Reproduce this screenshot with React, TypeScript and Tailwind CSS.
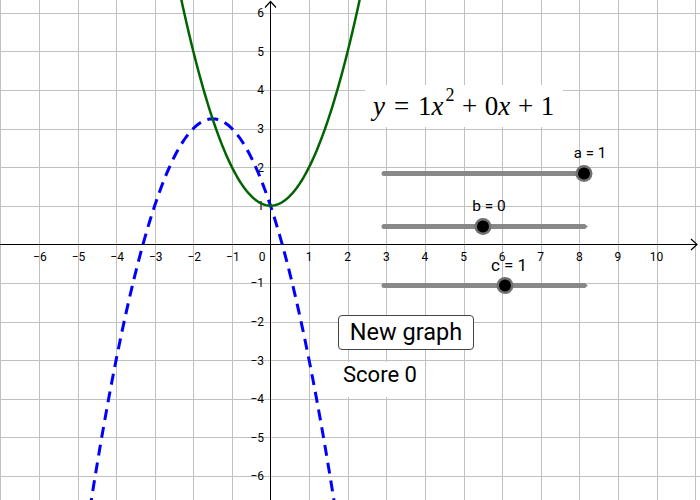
import React from "react";

const OX = 270.5;
const OY = 244.3;
const U = 38.6;

const px = (x: number) => OX + x * U;
const py = (y: number) => OY - y * U;
const snap = (v: number) => Math.round(v) + 0.5;

function curve(f: (x: number) => number, from: number, to: number) {
  const pts: string[] = [];
  const n = 160;
  for (let i = 0; i <= n; i++) {
    const x = from + ((to - from) * i) / n;
    pts.push(`${px(x).toFixed(2)},${py(f(x)).toFixed(2)}`);
  }
  return "M" + pts.join(" L");
}

const minus = (k: number) => (k < 0 ? `\u2212${-k}` : `${k}`);

type Slider = { y: number; knob: number; label: string; lx: number; ly: number; size: number; arrow: boolean };

const SLIDERS: Slider[] = [
  { y: 173.5, knob: 584, label: "a = 1", lx: 590, ly: 157.5, size: 15, arrow: false },
  { y: 226.5, knob: 483, label: "b = 0", lx: 489, ly: 211, size: 15.5, arrow: true },
  { y: 285.5, knob: 505, label: "c = 1", lx: 509, ly: 271, size: 17, arrow: true },
];

function Graph() {
  const xs = Array.from({ length: 19 }, (_, i) => i - 7);
  const ys = Array.from({ length: 15 }, (_, i) => i - 7);
  return (
    <svg width={700} height={500} className="absolute inset-0" style={{ fontFamily: "Roboto, 'Liberation Sans', sans-serif" }}>
      {/* grid */}
      {xs.filter((k) => k !== 0).map((k) => (
        <line key={"gx" + k} x1={snap(px(k))} x2={snap(px(k))} y1={0} y2={500} stroke="#c0c0c0" strokeWidth={1} />
      ))}
      {ys.filter((k) => k !== 0).map((k) => (
        <line key={"gy" + k} x1={0} x2={700} y1={snap(py(k))} y2={snap(py(k))} stroke="#c0c0c0" strokeWidth={1} />
      ))}

      {/* axes */}
      <line x1={0} x2={697} y1={244.5} y2={244.5} stroke="#000" strokeWidth={1} />
      <polyline points="691,239 697,244.5 691,250" fill="none" stroke="#000" strokeWidth={1.2} />
      <line x1={270.5} x2={270.5} y1={1.5} y2={500} stroke="#000" strokeWidth={1} />
      <polyline points="265,7.5 270.5,1.5 276,7.5" fill="none" stroke="#000" strokeWidth={1.2} />

      {/* tick labels */}
      {xs.filter((k) => k >= -6 && k <= 10 && k !== 0).map((k) => (
        <text key={"lx" + k} x={px(k) + (k < 0 ? 1 : 0)} y={261} fontSize={12} textAnchor="middle" fill="#000">
          {minus(k)}
        </text>
      ))}
      <text x={262} y={261} fontSize={12} textAnchor="middle" fill="#000">0</text>
      {ys.filter((k) => k >= -6 && k <= 6 && k !== 0).map((k) => (
        <text key={"ly" + k} x={264} y={py(k) + 4.5} fontSize={12} textAnchor="end" fill="#000">
          {minus(k)}
        </text>
      ))}

      {/* curves */}
      <path d={curve((x) => -x * x - 3 * x + 1, -4.75, 1.75)} fill="none" stroke="#0000ff" strokeWidth={3} strokeDasharray="11 7" />
      <path d={curve((x) => x * x + 1, -2.45, 2.45)} fill="none" stroke="#006400" strokeWidth={2.5} />

      {/* sliders */}
      {SLIDERS.map((s) => (
        <g key={s.label}>
          <line x1={384} x2={584} y1={s.y} y2={s.y} stroke="#888" strokeWidth={5} strokeLinecap="round" />
          {s.arrow && <polygon points={`584,${s.y - 2.5} 588,${s.y} 584,${s.y + 2.5}`} fill="#888" />}
          <circle cx={s.knob} cy={s.y} r={8.5} fill="#707070" />
          <circle cx={s.knob} cy={s.y} r={6} fill="#000" />
          <text x={s.lx} y={s.ly} fontSize={s.size} textAnchor="middle" fill="#000">
            {s.label}
          </text>
        </g>
      ))}
    </svg>
  );
}

export default function App() {
  return (
    <div className="relative w-[700px] h-[500px] overflow-hidden bg-white">
      <Graph />

      {/* equation */}
      <div className="absolute left-[365px] top-[85px] w-[198px] h-[42px] bg-white flex items-center pl-[8px] text-[27px] leading-none text-black font-['Liberation_Serif',serif]">
        <span className="italic">y</span>
        <span className="mx-[0.33em]">=</span>
        <span>1</span>
        <span className="italic">x</span>
        <span className="text-[18px] relative -top-[11px] ml-[2px]">2</span>
        <span className="mx-[0.28em]">+</span>
        <span>0</span>
        <span className="italic">x</span>
        <span className="mx-[0.28em]">+</span>
        <span>1</span>
      </div>

      {/* button */}
      <button className="absolute left-[338px] top-[315px] w-[136px] h-[35px] bg-white border-[1.5px] border-[#444] rounded-[4px] flex items-center justify-center text-[23.5px] text-black font-['Roboto',sans-serif]">
        New graph
      </button>

      {/* score */}
      <div className="absolute left-[336px] top-[362px] w-[87px] h-[35px] bg-white flex items-start pt-[1px] pl-[7px] text-[22px] leading-[24px] text-black font-['Roboto',sans-serif]">
        Score 0
      </div>
    </div>
  );
}
